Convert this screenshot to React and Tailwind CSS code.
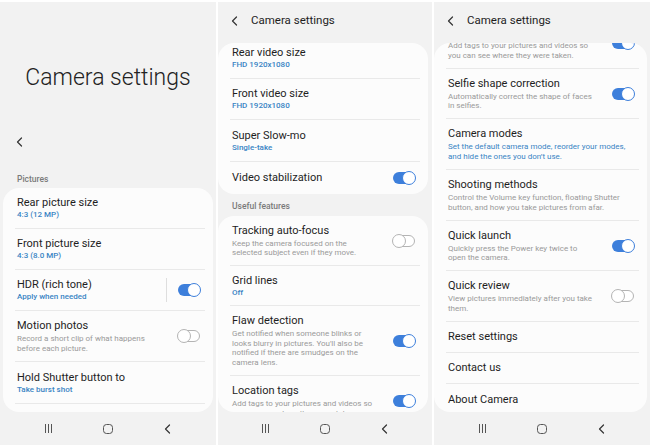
import React from "react";

const Toggle = ({ on }) =>
  on ? (
    <div className="relative w-[22px] h-[12px] rounded-full bg-[#3d7fdb] shrink-0">
      <div className="absolute right-[-1px] top-1/2 -translate-y-1/2 w-[14px] h-[14px] rounded-full bg-white border-[1.5px] border-[#3d7fdb]" />
    </div>
  ) : (
    <div className="relative w-[22px] h-[12px] rounded-full bg-white border border-[#b4b4b4] shrink-0">
      <div className="absolute left-[-2px] top-1/2 -translate-y-1/2 w-[14px] h-[14px] rounded-full bg-white border border-[#b4b4b4]" />
    </div>
  );

const Chevron = ({ className }) => (
  <svg className={className} viewBox="0 0 6 10" fill="none" stroke="#333" strokeWidth="1.2" strokeLinecap="round" strokeLinejoin="round">
    <polyline points="5,1 1,5 5,9" />
  </svg>
);

function Row({ h, title, sub, desc, blue, toggle, last, vline }) {
  return (
    <div className={`${h} shrink-0 pl-[12px] pr-[8px]`}>
      <div className={`h-full flex items-center pl-[2px] pr-[5px] ${last ? "" : "border-b border-[#e9e9e9]"}`}>
        <div className="flex-1 min-w-0">
          <div className="text-[11px] leading-[14px] text-[#1e1e1e] whitespace-nowrap">{title}</div>
          {sub && <div className="text-[8px] leading-[10px] text-[#3984c4] font-medium whitespace-nowrap">{sub}</div>}
          {desc && (
            <div className={`text-[8px] leading-[9.5px] whitespace-nowrap mt-[1px] ${blue ? "text-[#3984c4]" : "text-[#9a9a9a]"}`}>
              {desc.map((l) => (
                <div key={l}>{l}</div>
              ))}
            </div>
          )}
        </div>
        {vline && <div className="w-px h-[24px] bg-[#dedede] mr-[11px]" />}
        {toggle !== undefined && <Toggle on={toggle} />}
      </div>
    </div>
  );
}

const NavBar = () => (
  <div className="h-[33px] shrink-0 flex items-center justify-center gap-[50px]">
    <div className="w-[9px] h-[9px] flex justify-between px-[1px]">
      <div className="w-[1.3px] h-full bg-[#555]" />
      <div className="w-[1.3px] h-full bg-[#555]" />
      <div className="w-[1.3px] h-full bg-[#555]" />
    </div>
    <div className="w-[10px] h-[10px] rounded-[3.5px] border-[1.3px] border-[#555]" />
    <Chevron className="w-[9px] h-[10px]" />
  </div>
);

const Header = () => (
  <div className="h-[41px] shrink-0 flex items-center pl-[13px] pb-[4px]">
    <Chevron className="w-[7px] h-[10px]" />
    <span className="ml-[13px] text-[11.5px] text-[#1e1e1e]">Camera settings</span>
  </div>
);

const Label = ({ children, className }) => (
  <div className={`pl-[17px] text-[8.5px] leading-[12px] font-medium text-[#7a7a7a] ${className}`}>{children}</div>
);

export default function App() {
  return (
    <div className="w-[650px] h-[445px] flex bg-white overflow-hidden pt-[2px]" style={{ fontFamily: "Roboto, 'Noto Sans', sans-serif" }}>
      {/* left */}
      <div className="w-[216px] h-full flex flex-col bg-[#f2f2f2] overflow-hidden">
        <div className="pt-[62px] text-center text-[23px] leading-[28px] font-light text-[#222]">Camera settings</div>
        <div className="mt-[40px] h-[20px] flex items-center pl-[16px]">
          <Chevron className="w-[7px] h-[10px]" />
        </div>
        <Label className="mt-[21px]">Pictures</Label>
        <div className="mt-[3px] mx-[3px] flex-1 min-h-0 rounded-[16px] bg-[#fcfcfc] overflow-hidden">
          <Row h="h-[41px]" title="Rear picture size" sub="4:3 (12 MP)" />
          <Row h="h-[41px]" title="Front picture size" sub="4:3 (8.0 MP)" />
          <Row h="h-[41px]" title="HDR (rich tone)" sub="Apply when needed" toggle={true} vline />
          <Row h="h-[51px]" title="Motion photos" desc={["Record a short clip of what happens", "before each picture."]} toggle={false} />
          <Row h="h-[42px]" title="Hold Shutter button to" sub="Take burst shot" />
        </div>
        <NavBar />
      </div>

      {/* middle */}
      <div className="ml-[2px] w-[214px] h-full flex flex-col bg-[#f2f2f2] overflow-hidden">
        <Header />
        <div className="mr-[4px] shrink-0 rounded-[16px] bg-[#fcfcfc] overflow-hidden">
          <div className="mt-[-5px]">
            <Row h="h-[41px]" title="Rear video size" sub="FHD 1920x1080" />
            <Row h="h-[41px]" title="Front video size" sub="FHD 1920x1080" />
            <Row h="h-[42px]" title="Super Slow-mo" sub="Single-take" />
            <Row h="h-[32px]" title="Video stabilization" toggle={true} last />
          </div>
        </div>
        <Label className="mt-[6px] !pl-[14px]">Useful features</Label>
        <div className="mt-[4px] mr-[4px] flex-1 min-h-0 rounded-[16px] bg-[#fcfcfc] overflow-hidden">
          <Row h="h-[50px]" title="Tracking auto-focus" desc={["Keep the camera focused on the", "selected subject even if they move."]} toggle={false} />
          <Row h="h-[40px]" title="Grid lines" sub="Off" />
          <Row h="h-[70px]" title="Flaw detection" desc={["Get notified when someone blinks or", "looks blurry in pictures. You'll also be", "notified if there are smudges on the", "camera lens."]} toggle={true} />
          <Row h="h-[51px]" title="Location tags" desc={["Add tags to your pictures and videos so", "you can see where they were taken."]} toggle={true} />
        </div>
        <NavBar />
      </div>

      {/* right */}
      <div className="ml-[2px] w-[216px] h-full flex flex-col bg-[#f2f2f2] overflow-hidden">
        <Header />
        <div className="mr-[3px] flex-1 min-h-0 rounded-[16px] bg-[#fcfcfc] overflow-hidden">
          <div className="mt-[-25px]">
            <Row h="h-[51px]" title="Location tags" desc={["Add tags to your pictures and videos so", "you can see where they were taken."]} toggle={true} />
            <Row h="h-[50px]" title="Selfie shape correction" desc={["Automatically correct the shape of faces", "in selfies."]} toggle={true} />
            <Row h="h-[51px]" title="Camera modes" blue desc={["Set the default camera mode, reorder your modes,", "and hide the ones you don\u2019t use."]} />
            <Row h="h-[51px]" title="Shooting methods" desc={["Control the Volume key function, floating Shutter", "button, and how you take pictures from afar."]} />
            <Row h="h-[50px]" title="Quick launch" desc={["Quickly press the Power key twice to", "open the camera."]} toggle={true} />
            <Row h="h-[51px]" title="Quick review" desc={["View pictures immediately after you take", "them."]} toggle={false} />
            <Row h="h-[31px]" title="Reset settings" />
            <Row h="h-[31px]" title="Contact us" />
            <Row h="h-[31px]" title="About Camera" last />
          </div>
        </div>
        <NavBar />
      </div>
    </div>
  );
}
